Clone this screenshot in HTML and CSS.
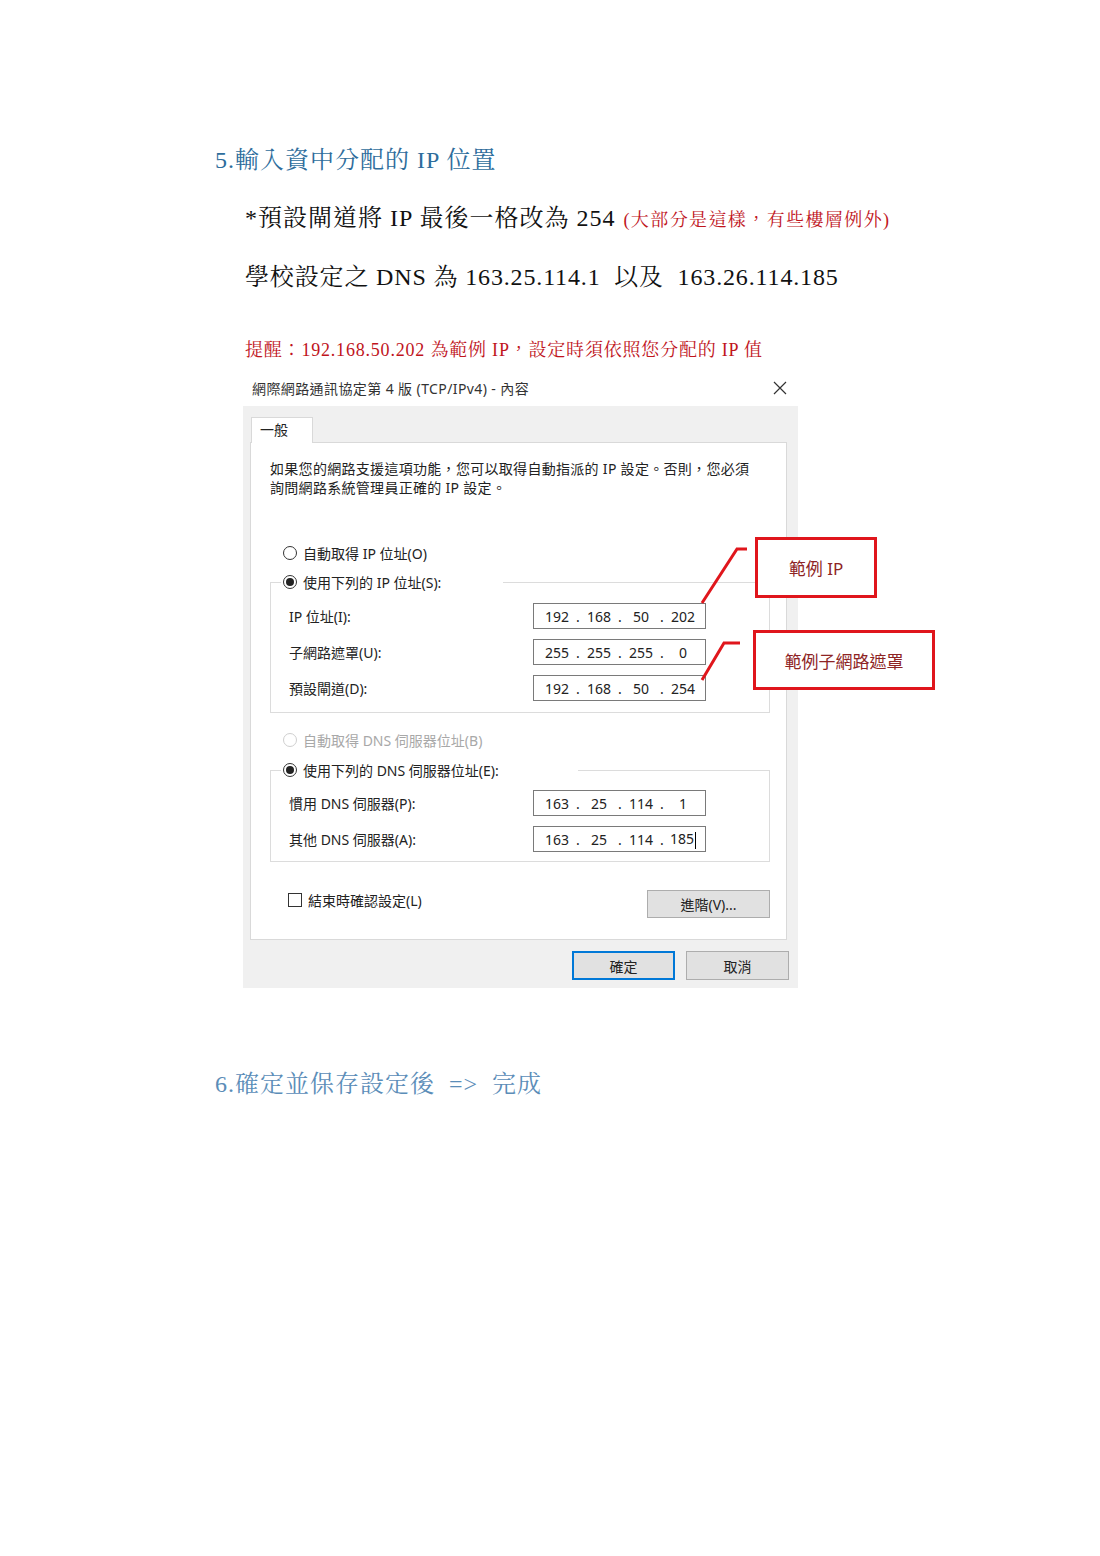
FILE: index.html
```html
<!DOCTYPE html>
<html lang="zh-Hant">
<head>
<meta charset="utf-8">
<title>IP 設定</title>
<link rel="stylesheet" href="styles.css">
</head>
<body>
<main class="page">
  <h2 class="step">5.輸入資中分配的 IP 位置</h2>
  <p class="line note-line">*預設閘道將 IP 最後一格改為 254<span class="aside">(大部分是這樣，有些樓層例外)</span></p>
  <p class="line dns-line">學校設定之 DNS 為 163.25.114.1  以及  163.26.114.185</p>
  <p class="reminder">提醒：192.168.50.202 為範例 IP，設定時須依照您分配的 IP 值</p>

  <div class="figure">
    <div class="dialog">
      <div class="titlebar">
        <span class="title">網際網路通訊協定第 4 版 (TCP/IPv4) - 內容</span>
        <svg class="close" width="14" height="14" viewBox="0 0 14 14"><path d="M1 1 L13 13 M13 1 L1 13" stroke="#333" stroke-width="1.2" fill="none"/></svg>
      </div>
      <div class="body">
        <div class="tab">一般</div>
        <div class="panel">
          <p class="desc">如果您的網路支援這項功能，您可以取得自動指派的 IP 設定。否則，您必須<br>詢問網路系統管理員正確的 IP 設定。</p>

          <div class="radio-row first"><span class="radio"></span><span>自動取得 IP 位址(O)</span></div>

          <fieldset class="group">
            <legend class="legend-ip"><span class="legend-inner"><span class="radio on"></span><span>使用下列的 IP 位址(S):</span></span></legend>
            <div class="rows">
              <span class="label">IP 位址(I):</span>
              <div class="ipbox"><span class="oct">192</span><span class="dot">.</span><span class="oct">168</span><span class="dot">.</span><span class="oct">50</span><span class="dot">.</span><span class="oct">202</span></div>
              <span class="label">子網路遮罩(U):</span>
              <div class="ipbox"><span class="oct">255</span><span class="dot">.</span><span class="oct">255</span><span class="dot">.</span><span class="oct">255</span><span class="dot">.</span><span class="oct">0</span></div>
              <span class="label">預設閘道(D):</span>
              <div class="ipbox"><span class="oct">192</span><span class="dot">.</span><span class="oct">168</span><span class="dot">.</span><span class="oct">50</span><span class="dot">.</span><span class="oct">254</span></div>
            </div>
          </fieldset>

          <div class="radio-row disabled dns-auto"><span class="radio"></span><span>自動取得 DNS 伺服器位址(B)</span></div>

          <fieldset class="group dns-group">
            <legend class="legend-dns"><span class="legend-inner"><span class="radio on"></span><span>使用下列的 DNS 伺服器位址(E):</span></span></legend>
            <div class="rows dns-rows">
              <span class="label">慣用 DNS 伺服器(P):</span>
              <div class="ipbox"><span class="oct">163</span><span class="dot">.</span><span class="oct">25</span><span class="dot">.</span><span class="oct">114</span><span class="dot">.</span><span class="oct">1</span></div>
              <span class="label">其他 DNS 伺服器(A):</span>
              <div class="ipbox"><span class="oct">163</span><span class="dot">.</span><span class="oct">25</span><span class="dot">.</span><span class="oct">114</span><span class="dot">.</span><span class="oct">185<b class="caret"></b></span></div>
            </div>
          </fieldset>

          <div class="check-row">
            <label class="check-label"><span class="checkbox"></span><span>結束時確認設定(L)</span></label>
            <span class="btn adv">進階(V)...</span>
          </div>
        </div>
        <div class="actions">
          <span class="btn default">確定</span>
          <span class="btn">取消</span>
        </div>
      </div>
    </div>

    <svg class="callout-lines" width="60" height="145" viewBox="0 0 60 145">
      <polyline points="9,61 44,7 54,7" fill="none" stroke="#e0161c" stroke-width="3"/>
      <polyline points="9,138 31,101 47,101" fill="none" stroke="#e0161c" stroke-width="3"/>
    </svg>
    <div class="callout callout-ip">範例 IP</div>
    <div class="callout callout-mask">範例子網路遮罩</div>
  </div>

  <h2 class="step step6">6.確定並保存設定後  =&gt;  完成</h2>
</main>
</body>
</html>
```

FILE: styles.css
```css
html, body {
  margin: 0;
  background: #fff;
}

.page {
  padding: 144px 0 0 215px;
  min-height: 1556px;
  box-sizing: border-box;
  font-family: "Liberation Serif", "Noto Serif CJK TC", "Noto Sans CJK TC", serif;
}

.step {
  margin: 0;
  font-size: 24px;
  line-height: 32px;
  font-weight: normal;
  letter-spacing: 1px;
  color: #2e6d9c;
  white-space: pre;
}

.step6 {
  margin-top: 80px;
  color: #5b8db8;
}

.line {
  margin: 0 0 0 30px;
  font-size: 24px;
  line-height: 32px;
  letter-spacing: 1px;
  color: #111;
}

.note-line {
  margin-top: 26px;
}

.dns-line {
  margin-top: 25px;
  white-space: pre;
  letter-spacing: 0.85px;
}

.aside {
  font-size: 18px;
  color: #c0141c;
  margin-left: 8px;
  letter-spacing: 1.4px;
}

.reminder {
  margin: 45px 0 0 30px;
  font-size: 18px;
  line-height: 24px;
  height: 24px;
  color: #c0141c;
  letter-spacing: 0.8px;
}

/* ---------- dialog figure ---------- */
.figure {
  position: relative;
  margin: 10px 0 0 28px;
  width: 555px;
}

.dialog {
  width: 555px;
  font-family: "Noto Sans", "Noto Sans CJK TC", sans-serif;
  font-size: 14px;
  color: #222;
}

.titlebar {
  height: 34px;
  box-sizing: border-box;
  display: flex;
  align-items: center;
  justify-content: space-between;
  padding: 0 11px 3px 9px;
  color: #333;
  letter-spacing: 0.4px;
}

.close {
  display: block;
}

.body {
  background: #f0f0f0;
  padding: 11px 11px 8px 7px;
}

.tab {
  margin-left: 1px;
  width: 62px;
  height: 26px;
  box-sizing: border-box;
  border: 1px solid #d9d9d9;
  border-bottom: none;
  background: #fff;
  padding-left: 8px;
  line-height: 24px;
  position: relative;
  z-index: 1;
  margin-bottom: -1px;
}

.panel {
  background: #fff;
  border: 1px solid #d9d9d9;
  padding: 16px 16px 21px 19px;
}

.desc {
  margin: 0;
  line-height: 19px;
  letter-spacing: 0.3px;
}

.radio-row {
  display: flex;
  align-items: center;
  height: 20px;
  padding-left: 13px;
  gap: 6px;
}

.radio-row.first {
  margin-top: 46px;
}

.radio {
  width: 14px;
  height: 14px;
  box-sizing: border-box;
  border: 1px solid #333;
  border-radius: 50%;
  background: #fff;
  display: inline-flex;
  align-items: center;
  justify-content: center;
  flex: none;
}

.radio.on::after {
  content: "";
  width: 8px;
  height: 8px;
  border-radius: 50%;
  background: #222;
}

.radio-row.disabled {
  color: #a8a8a8;
}

.radio-row.disabled .radio {
  border-color: #cfcfcf;
}

.dns-auto {
  margin-top: 17px;
}

.group {
  margin: 9px 0 0 0;
  padding: 0;
  border: 1px solid #dcdcdc;
  min-width: 0;
}

.dns-group {
  margin-top: 10px;
}

.group legend {
  margin-left: 10px;
  padding: 0 0 0 2px;
  height: 20px;
  box-sizing: border-box;
  background: #fff;
}

.legend-ip {
  width: 222px;
}

.legend-dns {
  width: 297px;
}

.legend-inner {
  display: flex;
  align-items: center;
  height: 20px;
  gap: 6px;
}

.rows {
  display: grid;
  grid-template-columns: 244px 173px;
  row-gap: 10px;
  align-items: center;
  padding: 11px 0 11px 18px;
}

.dns-rows {
  padding: 10px 0 9px 18px;
}

.ipbox {
  height: 26px;
  box-sizing: border-box;
  border: 1px solid #7a7a7a;
  display: flex;
  align-items: center;
  padding-left: 5px;
  color: #222;
}

.oct {
  width: 36px;
  text-align: center;
}

.dot {
  width: 6px;
  text-align: center;
}

.caret {
  display: inline-block;
  width: 1px;
  height: 17px;
  background: #000;
  margin-left: 1px;
  vertical-align: middle;
}

.check-row {
  display: flex;
  justify-content: space-between;
  align-items: center;
  margin-top: 28px;
  padding-left: 18px;
  height: 28px;
}

.check-label {
  display: flex;
  align-items: center;
  gap: 6px;
  margin-bottom: 8px;
}

.checkbox {
  width: 14px;
  height: 14px;
  box-sizing: border-box;
  border: 1px solid #333;
  background: #fff;
}

.btn {
  box-sizing: border-box;
  width: 123px;
  height: 28px;
  border: 1px solid #adadad;
  background: #e1e1e1;
  display: flex;
  align-items: center;
  justify-content: center;
  color: #222;
}

.actions {
  display: flex;
  justify-content: flex-end;
  gap: 11px;
  margin: 11px -2px 0 0;
}

.actions .btn {
  width: 103px;
  height: 29px;
}

.btn.default {
  border: 2px solid #0078d7;
}

/* ---------- red callouts ---------- */
.callout-lines {
  position: absolute;
  left: 450px;
  top: 170px;
  overflow: visible;
}

.callout {
  position: absolute;
  box-sizing: border-box;
  border: 3px solid #e0161c;
  background: #fff;
  display: flex;
  align-items: center;
  justify-content: center;
  font-family: "Noto Sans", "Noto Sans CJK TC", sans-serif;
  font-size: 17px;
  color: #8e2424;
}

.callout-ip {
  left: 512px;
  top: 165px;
  width: 122px;
  height: 61px;
}

.callout-mask {
  left: 510px;
  top: 258px;
  width: 182px;
  height: 60px;
}
```
